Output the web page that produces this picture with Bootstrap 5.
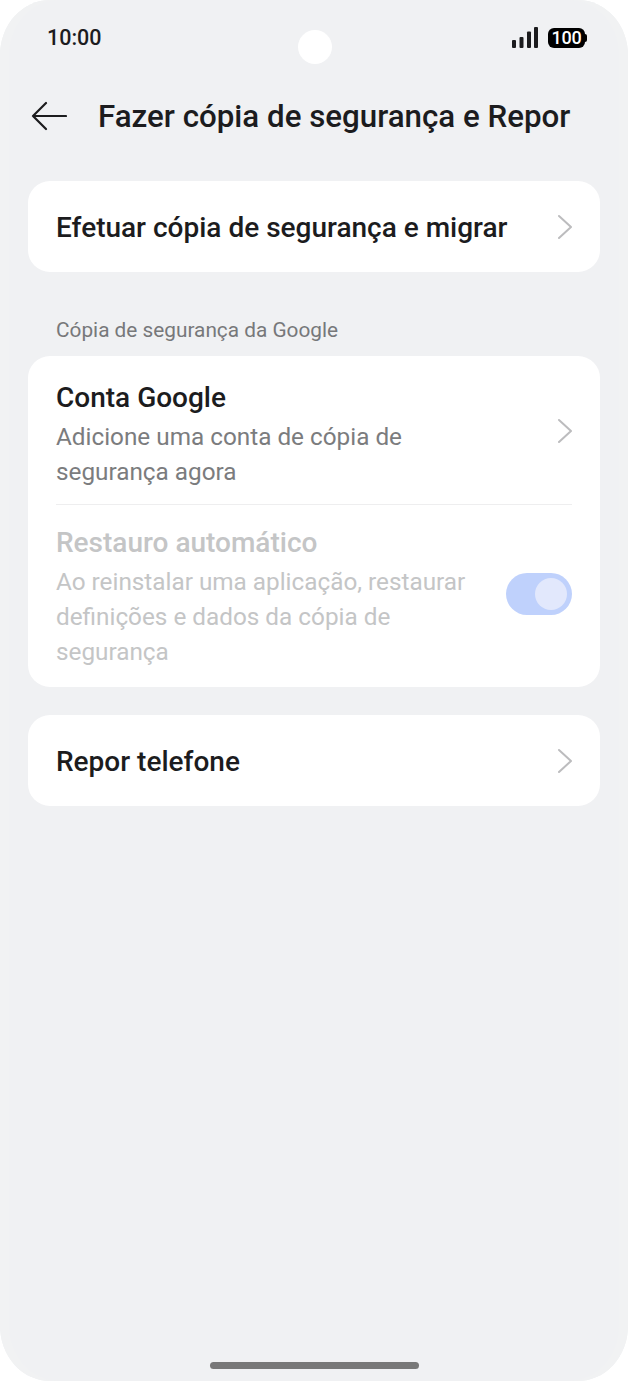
<!DOCTYPE html>
<html lang="pt">
<head>
  <meta charset="UTF-8">
  <title>Fazer cópia de segurança e Repor</title>
  <link href="https://cdn.jsdelivr.net/npm/bootstrap@5.3.3/dist/css/bootstrap.min.css" rel="stylesheet">
  <style>
    html, body { height: 100%; background: #fff; }
    body { font-family: Roboto, "Liberation Sans", sans-serif; color: #1c1c1e; }
    .screen { width: 628px; height: 1381px; background: #f0f1f3; border-radius: 50px / 55px; overflow: hidden; box-shadow: inset 9px 0 0 #f1f2f3, inset -9px 0 0 #f1f2f3; }
    .status-row { height: 74px; padding: 25px 41px 0 47px; }
    .clock { font-size: 21.500px; line-height: 26px; font-weight: 500; }
    .status-icons { margin-top: 2px; gap: 10px; }
    .cam-dot { width: 34px; height: 34px; background: #fff; border-radius: 50%; top: 30px; left: 298px; }
    .batt { width: 37px; height: 20px; background: #000; color: #fff; border-radius: 6px; font-size: 18px; line-height: 20px; font-weight: 500; text-align: center; letter-spacing: -.3px; }
    .batt-tip { width: 2px; height: 8px; background: #000; border-radius: 0 2px 2px 0; }
    .title-row { height: 84px; padding: 0 28px 0 31px; gap: 31px; }
    .page-title { font-size: 31.300px; line-height: 40px; font-weight: 500; margin: 0; padding-top: 1px; white-space: nowrap; }
    .list-box { background: #fff; border-radius: 22px; margin: 0 28px; padding: 0 28px; }
    .single-row { height: 91px; }
    .row-title { font-size: 28px; line-height: 36px; font-weight: 500; }
    .single-row .row-title { padding-top: 2px; }
    .row-sub { font-size: 24.300px; line-height: 35px; color: #7b7c7e; }
    .row-dim .row-title { color: #c4c5c6; }
    .row-dim .row-sub { color: #c4c5c6; }
    .caption { font-size: 20.800px; line-height: 26px; color: #77787a; margin: 45px 56px 13px; }
    .google-row { padding: 22px 0 14px; border-bottom: 1px solid #eeeeef; height: 149px; }
    .google-row .row-sub { margin-top: 3px; }
    .google-row > svg { margin-top: -6px; }
    .auto-row { padding: 19px 0 17px; gap: 20px; height: 182px; }
    .auto-row .row-sub { margin-top: 3px; }
    .toggle-off { width: 66px; height: 42px; background: #bfd1fc; border-radius: 21px; padding: 5px 5px 5px 0; margin-top: -7px; }
    .toggle-off span { width: 32px; height: 32px; background: #e2e8fc; border-radius: 50%; }
    .home-bar { width: 209px; height: 7px; background: #787878; border-radius: 4px; left: 210px; bottom: 12px; }
    .gap-card { margin-top: 28px; }
    .top-gap { margin-top: 23px; }
  </style>
</head>
<body>
  <div class="screen position-relative">
    <div class="status-row d-flex justify-content-between align-items-start">
      <span class="clock">10:00</span>
      <div class="status-icons d-flex align-items-center">
        <svg width="26" height="21" viewBox="0 0 26 21" fill="#1c1c1e">
          <rect x="0" y="13" width="4" height="8" rx="1"/>
          <rect x="7.500" y="10" width="4" height="11" rx="1"/>
          <rect x="15" y="4.500" width="4" height="16.500" rx="1"/>
          <rect x="22" y="0" width="4" height="21" rx="1"/>
        </svg>
        <div class="d-flex align-items-center">
          <div class="batt">100</div>
          <div class="batt-tip"></div>
        </div>
      </div>
    </div>
    <div class="cam-dot position-absolute"></div>

    <div class="title-row d-flex align-items-center">
      <svg width="36" height="30" viewBox="0 0 36 30" fill="none" stroke="#1c1c1e" stroke-width="2.200" stroke-linecap="round" stroke-linejoin="round">
        <path d="M35 15H2M15 2 2 15l13 13"/>
      </svg>
      <h1 class="page-title">Fazer cópia de segurança e Repor</h1>
    </div>

    <div class="list-box top-gap single-row d-flex align-items-center justify-content-between">
      <span class="row-title">Efetuar cópia de segurança e migrar</span>
      <svg width="16" height="26" viewBox="0 0 16 26" fill="none" stroke="#bcbcbe" stroke-width="2" stroke-linecap="round" stroke-linejoin="round"><path d="M3 2l12 11L3 24"/></svg>
    </div>

    <div class="caption">Cópia de segurança da Google</div>

    <div class="list-box">
      <div class="google-row d-flex align-items-center justify-content-between">
        <div>
          <div class="row-title">Conta Google</div>
          <div class="row-sub">Adicione uma conta de cópia de<br>segurança agora</div>
        </div>
        <svg width="16" height="26" viewBox="0 0 16 26" fill="none" stroke="#bcbcbe" stroke-width="2" stroke-linecap="round" stroke-linejoin="round"><path d="M3 2l12 11L3 24"/></svg>
      </div>
      <div class="auto-row row-dim d-flex align-items-center justify-content-between">
        <div>
          <div class="row-title">Restauro automático</div>
          <div class="row-sub">Ao reinstalar uma aplicação, restaurar<br>definições e dados da cópia de<br>segurança</div>
        </div>
        <div class="toggle-off d-flex justify-content-end flex-shrink-0"><span></span></div>
      </div>
    </div>

    <div class="list-box gap-card single-row d-flex align-items-center justify-content-between">
      <span class="row-title">Repor telefone</span>
      <svg width="16" height="26" viewBox="0 0 16 26" fill="none" stroke="#bcbcbe" stroke-width="2" stroke-linecap="round" stroke-linejoin="round"><path d="M3 2l12 11L3 24"/></svg>
    </div>

    <div class="home-bar position-absolute"></div>
  </div>
  <script src="https://cdn.jsdelivr.net/npm/bootstrap@5.3.3/dist/js/bootstrap.bundle.min.js"></script>
</body>
</html>
